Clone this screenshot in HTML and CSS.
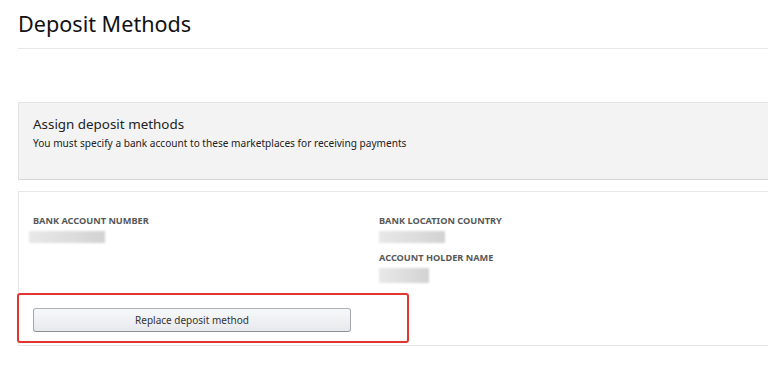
FILE: index.html
```html
<html>
<head>
    <title>Deposit Methods</title>
    <link rel="stylesheet" href="styles.css">
</head>
<body>
    <div class="page">
        <h1 class="page-title">Deposit Methods</h1>

        <div class="notice">
            <h2>Assign deposit methods</h2>
            <p>You must specify a bank account to these marketplaces for receiving payments</p>
        </div>

        <div class="card">
            <div class="fields">
                <div class="field">
                    <div class="label">BANK ACCOUNT NUMBER</div>
                    <div class="blurred acct"></div>
                </div>
                <div class="field-stack">
                    <div class="field">
                        <div class="label">BANK LOCATION COUNTRY</div>
                        <div class="blurred country"></div>
                    </div>
                    <div class="field">
                        <div class="label">ACCOUNT HOLDER NAME</div>
                        <div class="blurred holder"></div>
                    </div>
                </div>
            </div>
            <div class="highlight">
                <button class="replaceBtn">Replace deposit method</button>
            </div>
        </div>
    </div>
</body>
</html>
```

FILE: styles.css
```css
body {
    margin: 0;
    font-family: "Noto Sans", Arial, sans-serif;
    color: #111;
    background: #fff;
    overflow: hidden;
}
.page {
    padding-left: 18px;
}
.page-title {
    margin: 0;
    padding-top: 9px;
    height: 39px;
    font-size: 21.6px;
    font-weight: normal;
    line-height: 30px;
    border-bottom: 1px solid #e7e7e7;
}
.notice {
    margin-top: 53px;
    height: 78px;
    box-sizing: border-box;
    padding: 12px 14px;
    background-color: #f3f3f3;
    border: 1px solid #e3e3e3;
    border-bottom-color: #d5d5d5;
    border-right: none;
}
.notice h2 {
    margin: 0;
    font-size: 13.4px;
    font-weight: normal;
    line-height: 18px;
    color: #222;
}
.notice p {
    margin: 2px 0 0;
    font-size: 10.1px;
    line-height: 16px;
    color: #222;
}
.card {
    margin-top: 11px;
    border: 1px solid #e7e7e7;
    border-right: none;
    padding-top: 22px;
}
.fields {
    display: grid;
    grid-template-columns: 346px 1fr;
    padding-left: 14px;
}
.field {
    margin-bottom: 8px;
}
.label {
    font-size: 9.2px;
    font-weight: bold;
    color: #565959;
    line-height: 13px;
}
.blurred {
    margin-top: 4px;
    height: 12px;
    background: linear-gradient(90deg, #e8e8e8, #dcdcdc 60%, #d2d2d2);
    filter: blur(1px);
}
.blurred.acct {
    width: 76px;
    margin-left: -4px;
}
.blurred.country {
    width: 66px;
}
.blurred.holder {
    width: 50px;
    height: 15px;
}
.highlight {
    margin: 2px 0 2px -2px;
    width: 392px;
    height: 50px;
    box-sizing: border-box;
    padding: 13px 0 0 14px;
    border: 2px solid #e53530;
    border-radius: 3px;
}
.replaceBtn {
    display: block;
    width: 318px;
    height: 24px;
    padding: 0;
    font-family: "Noto Sans", Arial, sans-serif;
    font-size: 10px;
    color: #333;
    background: linear-gradient(#f7f8fa, #e7e9ec);
    border: 1px solid #adb1b8;
    border-color: #adb1b8 #a2a6ac #8d9096;
    border-radius: 3px;
    cursor: pointer;
}
```
